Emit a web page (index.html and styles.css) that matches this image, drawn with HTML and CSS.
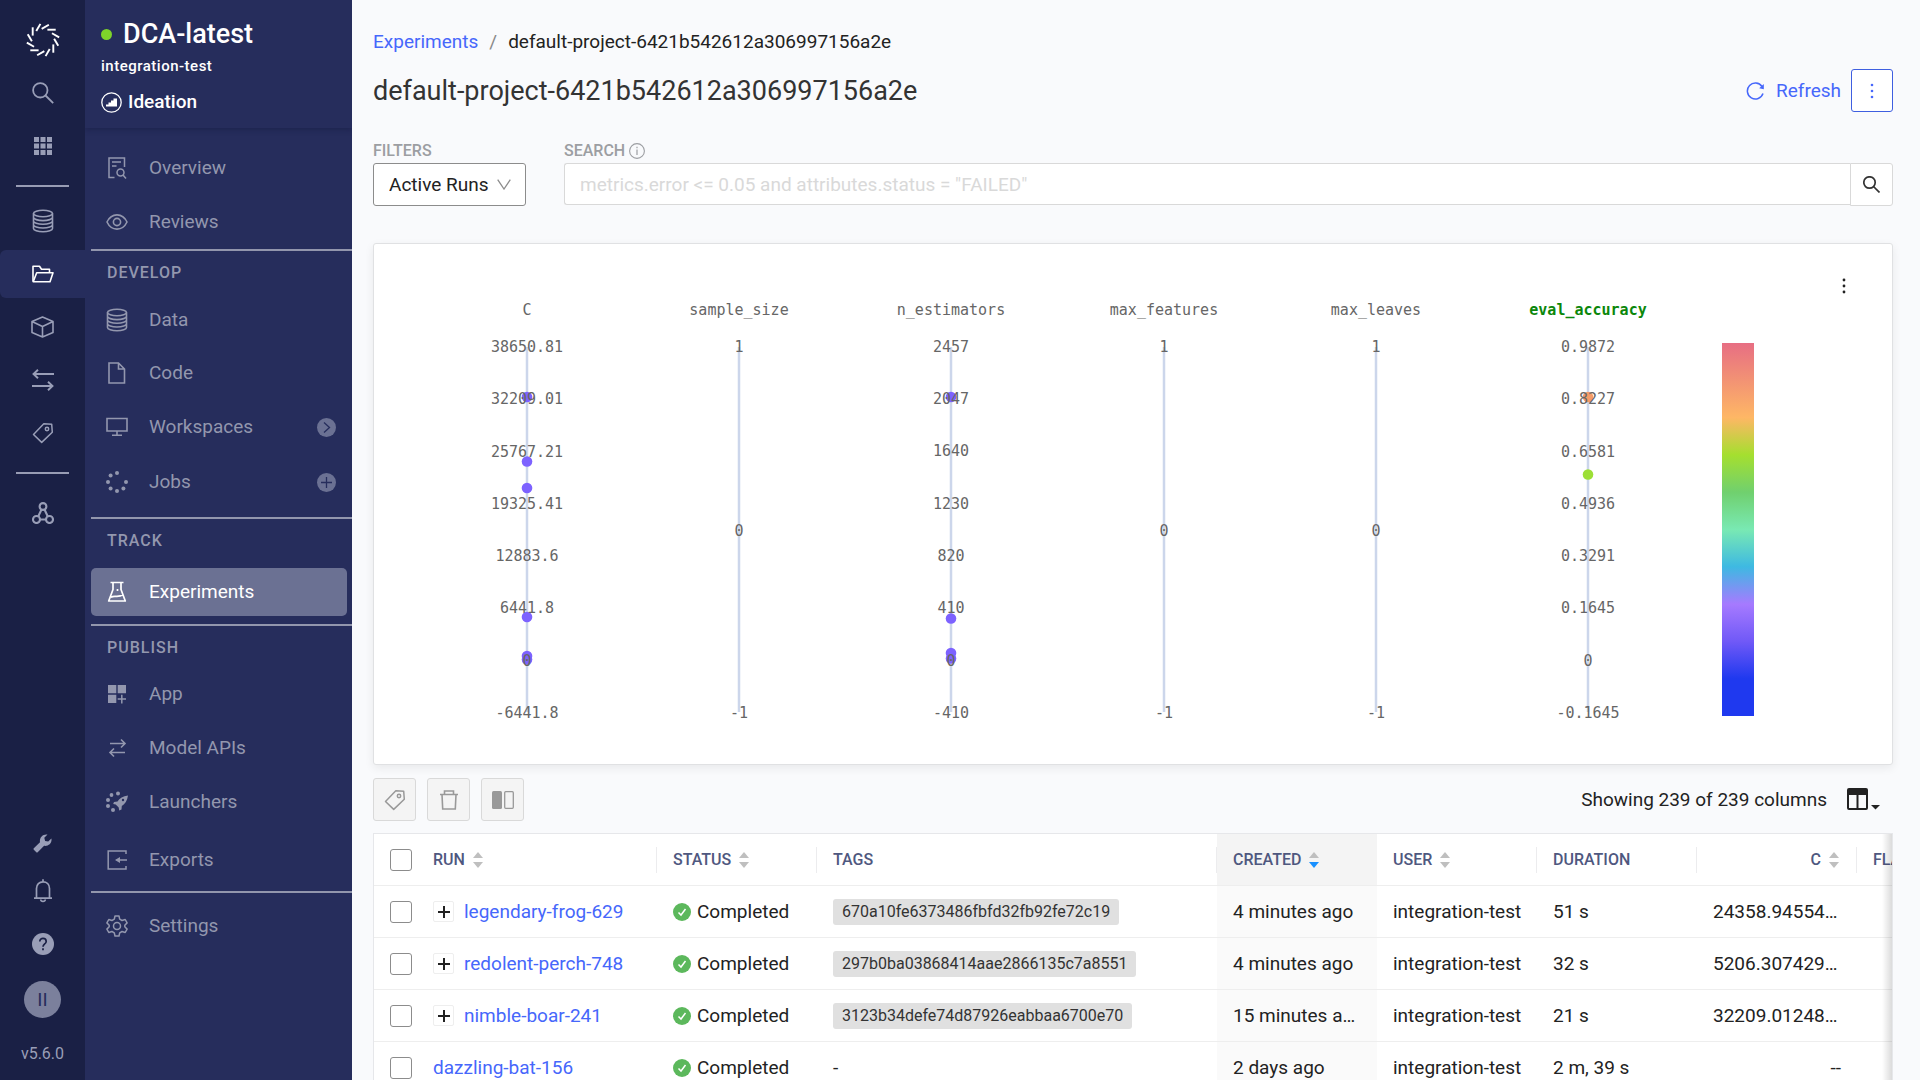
FILE: index.html
```html
<!DOCTYPE html>
<html lang="en">
<head>
<meta charset="utf-8">
<meta name="viewport" content="width=device-width, initial-scale=1">
<title>Experiments - DCA-latest</title>
<link rel="stylesheet" href="styles.css">
</head>
<body>
<svg class="sprite" aria-hidden="true">
  <symbol id="i-database" viewBox="0 0 22 24"><g fill="none" stroke="currentColor" stroke-width="1.6"><ellipse cx="11" cy="4.5" rx="9.5" ry="3.3"/><path d="M1.500 4.500V19.500c0 1.800 4.200 3.300 9.500 3.300s9.500-1.500 9.500-3.300V4.500M1.500 8.300c0 1.800 4.200 3.300 9.500 3.300s9.500-1.500 9.500-3.300M1.500 12c0 1.800 4.200 3.300 9.500 3.300s9.500-1.500 9.500-3.300M1.500 15.700c0 1.800 4.200 3.300 9.500 3.300s9.500-1.500 9.500-3.300"/></g></symbol>
  <symbol id="i-tag" viewBox="0 0 22 22"><g fill="none" stroke="currentColor" stroke-width="1.500" stroke-linejoin="round"><path d="M1.500 12.500 11.800 1.700 19.700 2.200 20.300 10.200 9.700 20.400Z"/><circle cx="15" cy="7" r="1.700"/></g></symbol>
  <symbol id="i-sort" viewBox="0 0 10 16"><path class="sort-up" d="M5 0l5 6H0z"/><path class="sort-down" d="M5 16l5-6H0z"/></symbol>
  <symbol id="i-check" viewBox="0 0 18 18"><circle cx="9" cy="9" r="9" fill="#5cb85c"/><path d="M5.500 9.500l2.500 2.500 4.500-6" fill="none" stroke="#fff" stroke-width="1.500"/></symbol>
  <symbol id="i-plus" viewBox="0 0 12 12"><path d="M6 0v12M0 6h12" fill="none" stroke="#222" stroke-width="2"/></symbol>
</svg>
<div class="app">
  <nav class="rail" aria-label="Global">
    <a class="rail-logo" href="#" aria-label="Home"><svg width="36" height="36" viewBox="-18 -18 36 36"><defs><path id="ray" d="M4.400-10.300H12.700"/></defs><g stroke="#fff" stroke-width="1.900"><use href="#ray"/><use href="#ray" transform="rotate(30)"/><use href="#ray" transform="rotate(60)"/><use href="#ray" transform="rotate(90)"/><use href="#ray" transform="rotate(120)"/><use href="#ray" transform="rotate(150)"/><use href="#ray" transform="rotate(180)"/><use href="#ray" transform="rotate(210)"/><use href="#ray" transform="rotate(240)"/><use href="#ray" transform="rotate(270)"/><use href="#ray" transform="rotate(300)"/><use href="#ray" transform="rotate(330)"/></g></svg></a>
    <a class="rail-item" href="#" aria-label="Search"><svg width="22" height="22" viewBox="0 0 22 22"><g fill="none" stroke="currentColor" stroke-width="1.800"><circle cx="8.300" cy="8.300" r="7.200"/><path d="M13.500 13.500l7.700 7.700"/></g></svg></a>
    <a class="rail-item" href="#" aria-label="Apps"><svg width="18" height="18" viewBox="0 0 18 18"><path fill="currentColor" d="M0 0h5v5H0zM6.500 0h5v5h-5zM13 0h5v5h-5zM0 6.500h5v5H0zM6.500 6.500h5v5h-5zM13 6.500h5v5h-5zM0 13h5v5H0zM6.500 13h5v5h-5zM13 13h5v5h-5z"/></svg></a>
    <hr class="rail-line">
    <a class="rail-item rail-first" href="#" aria-label="Data"><svg width="22" height="24"><use href="#i-database"/></svg></a>
    <a class="rail-item rail-active" href="#" aria-label="Projects"><svg width="22" height="18" viewBox="0 0 22 18"><g fill="none" stroke="currentColor" stroke-width="1.600" stroke-linejoin="round"><path d="M1 16.500V1.200h6.500l2 3h8v3.500"/><path d="M1.200 16.700 4.700 7.700H21L18 16.700Z"/></g></svg></a>
    <a class="rail-item" href="#" aria-label="Models"><svg width="23" height="22" viewBox="0 0 23 22"><g fill="none" stroke="currentColor" stroke-width="1.600" stroke-linejoin="round"><path d="M11.500 1 22 5.500V16.500L11.500 21 1 16.500V5.500ZM1 5.500l10.500 5L22 5.500M11.500 10.500V21"/></g></svg></a>
    <a class="rail-item" href="#" aria-label="Transfers"><svg width="22" height="22" viewBox="0 0 22 22"><g fill="none" stroke="currentColor" stroke-width="1.900"><path d="M22 5H1.500M6 .7 1.500 5 6 9.300M0 17h20.500M16 12.700l4.500 4.300-4.500 4.300"/></g></svg></a>
    <a class="rail-item" href="#" aria-label="Tags"><svg width="22" height="22"><use href="#i-tag"/></svg></a>
    <hr class="rail-line">
    <a class="rail-item rail-cluster" href="#" aria-label="Clusters"><svg width="22" height="22" viewBox="0 0 22 22"><g fill="none" stroke="currentColor" stroke-width="2.100"><circle cx="11" cy="4.500" r="3.400"/><circle cx="4.500" cy="17.500" r="3.500"/><circle cx="17.500" cy="17.500" r="3.500"/><path d="M9.500 7.500 6.200 14.500M12.500 7.500l3.300 7M8 17.500h6"/></g></svg></a>
    <div class="rail-bottom">
      <a class="rail-item" href="#" aria-label="Admin"><svg width="19" height="19" viewBox="0 0 19 19"><path fill="currentColor" d="M.8 14.300 7 8.200C6.200 3.500 9.800-.3 14.500.5L11.300 3.700l.8 3.200 3.100.7 3.200-3.200c.9 4.500-2.800 8.100-7.300 7.400l-6.400 6.400c-.4.400-1 .4-1.400 0L.8 15.700c-.4-.4-.4-1 0-1.400Z"/></svg></a>
      <a class="rail-item" href="#" aria-label="Notifications"><svg width="18" height="24" viewBox="0 0 18 24"><path d="M2.500 19V9.500C2.500 5.500 5.300 2.800 9 2.800s6.500 2.700 6.500 6.700V19M0 19.200h18M9 .3v2.500M6.700 20.500c.3 2.600 4.300 2.600 4.600 0" fill="none" stroke="currentColor" stroke-width="1.700"/></svg></a>
      <a class="rail-item rail-help" href="#" aria-label="Help"><svg width="22" height="22" viewBox="0 0 22 22"><circle cx="11" cy="11" r="11" fill="currentColor"/><path d="M7.800 8.600c0-4.300 6.400-4 6.400-.2 0 2.500-3.200 2.600-3.200 5.400M11 15.300v2" fill="none" stroke="#1a2045" stroke-width="1.700"/></svg></a>
      <button class="avatar" type="button">II</button>
      <span class="version">v5.6.0</span>
    </div>
  </nav>

  <aside class="side">
    <header class="side-head">
      <div class="project"><span class="dot"></span>DCA-latest</div>
      <div class="owner">integration-test</div>
      <div class="stage"><svg width="21" height="21" viewBox="0 0 21 21"><circle cx="10.500" cy="10.500" r="9.700" fill="none" stroke="#fff" stroke-width="1.300"/><path fill="#fff" d="M5 14.500V12.500h2.500v-2H10v-2h2.500v-2H16v8Z"/></svg>Ideation</div>
    </header>
    <nav class="menu" aria-label="Project">
      <div class="group">
        <a class="item" href="#"><svg class="ico" viewBox="0 0 22 22"><g fill="none" stroke="currentColor" stroke-width="1.500"><path d="M8.500 20.500H3V1h15.500v9M6 5h9M6 9h4.500"/><circle cx="14.500" cy="15.500" r="3.500"/><path d="M17 18l3 3.500"/></g></svg>Overview</a>
        <a class="item" href="#"><svg class="ico" viewBox="0 0 22 22"><g fill="none" stroke="currentColor" stroke-width="1.600"><path d="M1 11c4.500-9.500 15.500-9.500 20 0-4.500 9.500-15.500 9.500-20 0Z"/><circle cx="11" cy="11" r="3.600"/></g></svg>Reviews</a>
      </div>
      <h2 class="heading">DEVELOP</h2>
      <div class="group group-develop">
        <a class="item" href="#"><svg class="ico ico-tall"><use href="#i-database"/></svg>Data</a>
        <a class="item" href="#"><svg class="ico" viewBox="0 0 22 22"><path d="M3 1h9.500l6 6v14H3ZM12.500 1v6h6" fill="none" stroke="currentColor" stroke-width="1.600"/></svg>Code</a>
        <a class="item item-action" href="#"><svg class="ico" viewBox="0 0 22 22"><path d="M1 2.500h20v12.500H1ZM11 15v4M6 19.200h10" fill="none" stroke="currentColor" stroke-width="1.600"/></svg>Workspaces<svg class="badge" viewBox="0 0 19 19"><circle cx="9.500" cy="9.500" r="9.500" fill="#6b7193"/><path d="M7 4.500l5.500 5-5.500 5" fill="none" stroke="#262d5c" stroke-width="1.300"/></svg></a>
        <a class="item item-action" href="#"><svg class="ico" viewBox="0 0 22 22"><g fill="currentColor"><circle cx="11" cy="2" r="2"/><circle cx="4.600" cy="4.600" r="2"/><circle cx="2" cy="11" r="2"/><circle cx="4.600" cy="17.400" r="2"/><circle cx="11" cy="20" r="2"/><circle cx="17.400" cy="17.400" r="2"/><circle cx="20" cy="11" r="2"/></g></svg>Jobs<svg class="badge" viewBox="0 0 19 19"><circle cx="9.500" cy="9.500" r="9.500" fill="#6b7193"/><path d="M9.500 4v11M4 9.500h11" fill="none" stroke="#262d5c" stroke-width="1.300"/></svg></a>
      </div>
      <h2 class="heading">TRACK</h2>
      <div class="group group-track">
        <a class="item item-active" href="#" aria-current="page"><svg class="ico" viewBox="0 0 22 22"><g fill="none" stroke="currentColor" stroke-width="1.700" stroke-linejoin="round"><path d="M4.500 1.500h13M7 1.500v7L2.700 20h16.600L15 8.500v-7M5 16.500c3-3 7 1 12-3"/><path d="M11.500 8v2"/></g></svg>Experiments</a>
      </div>
      <h2 class="heading">PUBLISH</h2>
      <div class="group group-publish">
        <a class="item" href="#"><svg class="ico" viewBox="0 0 22 22"><path fill="currentColor" d="M2 2h8.300v8.300H2zM11.700 2H20v8.300h-8.300zM2 11.700h8.300V20H2z"/><path d="M15.800 11.700V20.500M11.700 16H20" stroke="currentColor" stroke-width="1.500"/></svg>App</a>
        <a class="item" href="#"><svg class="ico" viewBox="0 0 22 22"><path d="M4 6.500h15M15 2.500l4 4-4 4M19 15.500H4M8 11.500l-4 4 4 4" fill="none" stroke="currentColor" stroke-width="1.600"/></svg>Model APIs</a>
        <a class="item" href="#"><svg class="ico" viewBox="0 0 22 22"><g fill="currentColor"><circle cx="12" cy="2.500" r="2"/><circle cx="5.500" cy="4" r="1.900"/><circle cx="2" cy="9" r="2"/><circle cx="2" cy="15" r="2"/><circle cx="7" cy="19" r="2"/><path d="M22 4.500c-5 .5-8.500 3-10.500 6L8 11l-.8 2 2.500.5 3 3 .5 3 2.300-1 .3-3.500c3.200-2 5.500-5.500 6.200-10.500Z"/></g><circle cx="17" cy="9" r="1.200" fill="#262d5c"/></svg>Launchers</a>
        <a class="item item-exports" href="#"><svg class="ico" viewBox="0 0 22 22"><path d="M20 5V2H2.200v18H20v-3M21 11H10.500" fill="none" stroke="currentColor" stroke-width="1.500"/><path fill="currentColor" d="M9 11l5-3v6z"/></svg>Exports</a>
      </div>
      <div class="group group-settings">
        <a class="item" href="#"><svg class="ico" viewBox="0 0 22 22"><g fill="none" stroke="currentColor" stroke-width="1.500" stroke-linejoin="round"><path d="M9 1h4l.7 3.200 2.300 1.300L19.200 4.500l1.900 3.400L18.800 10.200v1.600l2.300 2.300-1.900 3.400L16 16.500l-2.300 1.300L13 21H9l-.7-3.200L6 16.500 2.800 17.500.9 14.100l2.300-2.300v-1.600L.9 7.900 2.800 4.500 6 5.500l2.300-1.300Z"/><circle cx="11" cy="11" r="3.500"/></g></svg>Settings</a>
      </div>
    </nav>
  </aside>

  <main class="main">
    <div class="crumbs"><a href="#">Experiments</a><span class="slash">/</span><span>default-project-6421b542612a306997156a2e</span></div>
    <div class="title-row">
      <h1>default-project-6421b542612a306997156a2e</h1>
      <button class="refresh" type="button"><svg width="18" height="18" viewBox="0 0 18 18"><path d="M16 4.500A8 8 0 1 0 17 11.500" fill="none" stroke="currentColor" stroke-width="1.500"/><path d="M17.800 2v5.200l-4.600-1z" fill="currentColor"/></svg>Refresh</button>
      <button class="more" type="button" aria-label="More actions"><svg width="4" height="18" viewBox="0 0 4 18"><g fill="currentColor"><circle cx="2" cy="3" r="1.300"/><circle cx="2" cy="9" r="1.300"/><circle cx="2" cy="15" r="1.300"/></g></svg></button>
    </div>
    <form class="filters">
      <div class="field">
        <label for="state">FILTERS</label>
        <div class="select"><select id="state"><option>Active Runs</option></select><svg width="14" height="11" viewBox="0 0 14 11"><path d="M.7.7 7 10 13.300.7" fill="none" stroke="#8c8c8c" stroke-width="1.300"/></svg></div>
      </div>
      <div class="field field-wide">
        <label for="query">SEARCH <svg width="16" height="16" viewBox="0 0 16 16"><circle cx="8" cy="8" r="7.400" fill="none" stroke="currentColor" stroke-width="1.100"/><path d="M8 6.500v5.500M8 3.800v1.500" stroke="currentColor" stroke-width="1.200"/></svg></label>
        <div class="search"><input id="query" type="text" placeholder='metrics.error &lt;= 0.05 and attributes.status = "FAILED"'><button type="submit" aria-label="Search"><svg width="17" height="17" viewBox="0 0 17 17"><g fill="none" stroke="#333" stroke-width="1.700"><circle cx="6.500" cy="6.500" r="5.700"/><path d="M10.500 10.500l6 6"/></g></svg></button></div>
      </div>
    </form>

    <section class="card">
      <button class="card-menu" type="button" aria-label="Chart menu"><svg width="4" height="18" viewBox="0 0 4 18"><g fill="#222"><circle cx="2" cy="3" r="1.400"/><circle cx="2" cy="9" r="1.400"/><circle cx="2" cy="15" r="1.400"/></g></svg></button>
      <svg class="chart" viewBox="0 -1 1518 520" role="img" aria-label="Parallel coordinates">
        <defs><linearGradient id="scale" x1="0" y1="0" x2="0" y2="1"><stop offset="0" stop-color="#e76e83"/><stop offset=".2" stop-color="#feb765"/><stop offset=".3" stop-color="#a5df2f"/><stop offset=".4" stop-color="#70d06e"/><stop offset=".5" stop-color="#79e9b3"/><stop offset=".6" stop-color="#3eb9e2"/><stop offset=".7" stop-color="#a67aff"/><stop offset=".8" stop-color="#7059f7"/><stop offset=".9" stop-color="#1f39ef"/></linearGradient></defs>
        <path class="axis" d="M153 102V467M365 102V467M577 102V467M790 102V467M1002 102V467M1214 102V467"/>
        <g fill="#7d62ff"><circle cx="153" cy="152" r="5.300"/><circle cx="153" cy="216.500" r="5.300"/><circle cx="153" cy="243" r="5.300"/><circle cx="153" cy="372" r="5.300"/><circle cx="153" cy="411" r="5.300"/><circle cx="153" cy="414.500" r="5.300"/><circle cx="577" cy="152" r="5.300"/><circle cx="577" cy="373.500" r="5.300"/><circle cx="577" cy="408" r="5.300"/><circle cx="577" cy="413.500" r="5.300"/></g>
        <circle cx="1214" cy="152" r="5.300" fill="#f59c69"/><circle cx="1214" cy="229.500" r="5.300" fill="#9ddf36"/>
        <g class="names"><text x="153" y="70">C</text><text x="365" y="70">sample_size</text><text x="577" y="70">n_estimators</text><text x="790" y="70">max_features</text><text x="1002" y="70">max_leaves</text><text class="target" x="1214" y="70">eval_accuracy</text></g>
        <g class="ticks">
          <text x="153" y="107">38650.81</text><text x="153" y="159">32209.01</text><text x="153" y="212">25767.21</text><text x="153" y="264">19325.41</text><text x="153" y="316">12883.6</text><text x="153" y="368">6441.8</text><text x="153" y="421">0</text><text x="153" y="473">-6441.8</text>
          <text x="365" y="107">1</text><text x="365" y="291">0</text><text x="365" y="473">-1</text>
          <text x="577" y="107">2457</text><text x="577" y="159">2047</text><text x="577" y="211">1640</text><text x="577" y="264">1230</text><text x="577" y="316">820</text><text x="577" y="368">410</text><text x="577" y="421">0</text><text x="577" y="473">-410</text>
          <text x="790" y="107">1</text><text x="790" y="291">0</text><text x="790" y="473">-1</text>
          <text x="1002" y="107">1</text><text x="1002" y="291">0</text><text x="1002" y="473">-1</text>
          <text x="1214" y="107">0.9872</text><text x="1214" y="159">0.8227</text><text x="1214" y="212">0.6581</text><text x="1214" y="264">0.4936</text><text x="1214" y="316">0.3291</text><text x="1214" y="368">0.1645</text><text x="1214" y="421">0</text><text x="1214" y="473">-0.1645</text>
        </g>
        <rect x="1348" y="98" width="32" height="373" fill="url(#scale)"/>
      </svg>
    </section>

    <div class="toolbar">
      <button class="tool" type="button" aria-label="Tag runs" disabled><svg width="22" height="22"><use href="#i-tag"/></svg></button>
      <button class="tool" type="button" aria-label="Delete runs" disabled><svg width="18" height="20" viewBox="0 0 18 20"><path d="M0 4.500h18M4.500 4.500v-3.500h9v3.500M2 4.500l.7 14.500h12.600L16 4.500" fill="none" stroke="currentColor" stroke-width="1.600"/></svg></button>
      <button class="tool" type="button" aria-label="Compare runs" disabled><svg width="22" height="18" viewBox="0 0 22 18"><rect width="10" height="18" rx="1.500" fill="currentColor"/><rect x="12.700" y=".7" width="8.600" height="16.600" rx="1" fill="none" stroke="currentColor" stroke-width="1.300"/></svg></button>
      <span class="count">Showing 239 of 239 columns</span>
      <button class="columns" type="button" aria-label="Choose columns"><svg width="33" height="23" viewBox="0 0 33 23"><path fill="#222" fill-rule="evenodd" d="M2 0h17a2 2 0 0 1 2 2v18a2 2 0 0 1-2 2H2a2 2 0 0 1-2-2V2a2 2 0 0 1 2-2ZM2 7v13h7.500V7ZM11.500 7v13H19V7Z"/><path fill="#222" d="M24 17h9l-4.500 4.500z"/></svg></button>
    </div>

    <div class="table-wrap">
      <table class="runs">
        <colgroup><col class="c-check"><col class="c-run"><col class="c-std"><col class="c-tags"><col class="c-std"><col class="c-std"><col class="c-std"><col class="c-std"><col class="c-std"></colgroup>
        <thead><tr>
          <th class="check"><input type="checkbox" aria-label="Select all runs"></th>
          <th><span class="th line">RUN<svg class="sort"><use href="#i-sort"/></svg></span></th>
          <th><span class="th line">STATUS<svg class="sort"><use href="#i-sort"/></svg></span></th>
          <th><span class="th line">TAGS</span></th>
          <th class="sorted"><span class="th">CREATED<svg class="sort sort-desc"><use href="#i-sort"/></svg></span></th>
          <th><span class="th line">USER<svg class="sort"><use href="#i-sort"/></svg></span></th>
          <th><span class="th line">DURATION</span></th>
          <th><span class="th line th-num">C<svg class="sort"><use href="#i-sort"/></svg></span></th>
          <th><span class="th">FLAG</span></th>
        </tr></thead>
        <tbody>
          <tr><td class="check"><input type="checkbox" aria-label="Select legendary-frog-629"></td><td><div class="run"><button class="expand" type="button" aria-label="Expand"><svg width="12" height="12"><use href="#i-plus"/></svg></button><a href="#">legendary-frog-629</a></div></td><td><div class="status"><svg width="18" height="18"><use href="#i-check"/></svg>Completed</div></td><td><span class="chip">670a10fe6373486fbfd32fb92fe72c19</span></td><td class="sorted">4 minutes ago</td><td class="user">integration-test</td><td>51 s</td><td class="num">24358.945541076</td><td></td></tr>
          <tr><td class="check"><input type="checkbox" aria-label="Select redolent-perch-748"></td><td><div class="run"><button class="expand" type="button" aria-label="Expand"><svg width="12" height="12"><use href="#i-plus"/></svg></button><a href="#">redolent-perch-748</a></div></td><td><div class="status"><svg width="18" height="18"><use href="#i-check"/></svg>Completed</div></td><td><span class="chip">297b0ba03868414aae2866135c7a8551</span></td><td class="sorted">4 minutes ago</td><td class="user">integration-test</td><td>32 s</td><td class="num">5206.3074291862</td><td></td></tr>
          <tr><td class="check"><input type="checkbox" aria-label="Select nimble-boar-241"></td><td><div class="run"><button class="expand" type="button" aria-label="Expand"><svg width="12" height="12"><use href="#i-plus"/></svg></button><a href="#">nimble-boar-241</a></div></td><td><div class="status"><svg width="18" height="18"><use href="#i-check"/></svg>Completed</div></td><td><span class="chip">3123b34defe74d87926eabbaa6700e70</span></td><td class="sorted">15 minutes ago</td><td class="user">integration-test</td><td>21 s</td><td class="num">32209.012481305</td><td></td></tr>
          <tr><td class="check"><input type="checkbox" aria-label="Select dazzling-bat-156"></td><td><div class="run"><a href="#">dazzling-bat-156</a></div></td><td><div class="status"><svg width="18" height="18"><use href="#i-check"/></svg>Completed</div></td><td>-</td><td class="sorted">2 days ago</td><td class="user">integration-test</td><td>2 m, 39 s</td><td class="num">--</td><td></td></tr>
        </tbody>
      </table>
    </div>
  </main>
</div>
</body>
</html>
```
FILE: styles.css
```css
* { box-sizing: border-box; }
body { margin: 0; font-family: Roboto, "Liberation Sans", sans-serif; font-size: 19px; line-height: 24px; color: #222; background: #f9fafc; }
a { color: #4667fb; text-decoration: none; }
button, input, select { font: inherit; color: inherit; margin: 0; }
button { cursor: pointer; padding: 0; border: 0; background: none; }
svg { display: block; flex: none; }
h1, h2 { margin: 0; font-weight: 400; }
.sprite { display: none; }
.app { display: flex; height: 100vh; overflow: hidden; }

/* icon rail */
.rail { width: 85px; flex: none; display: flex; flex-direction: column; gap: 5px; padding: 16px 0 15px; background: #1a2045; color: #999eb7; }
.rail a { color: inherit; }
.rail-logo, .rail-item { height: 48px; display: flex; align-items: center; justify-content: center; }
.rail-line { width: 53px; height: 2px; margin: 10px auto 0; border: 0; background: #989cb4; }
.rail-first { margin-top: 5px; }
.rail .rail-active { background: #262d5c; color: #fff; border-radius: 6px 0 0 6px; }
.rail-cluster { margin-top: 10px; }
.rail-bottom { margin-top: auto; display: flex; flex-direction: column; }
.rail-help { margin-top: 5px; }
.avatar { width: 37px; height: 37px; margin: 13px auto 0; border-radius: 50%; background: #7b809c; color: #262d5c; }
.version { margin-top: 25px; text-align: center; font-size: 16px; line-height: 22px; }

/* project menu */
.side { width: 267px; flex: none; background: #262d5c; color: #9397ae; }
.side-head { height: 128px; padding: 18px 16px 0; color: #fff; font-weight: 500; box-shadow: 0 2px 5px rgba(15, 20, 55, .35); clip-path: inset(0 0 -8px 0); }
.project { display: flex; align-items: center; gap: 11px; font-size: 27px; line-height: 32px; }
.dot { width: 11px; height: 11px; border-radius: 50%; background: #7ed32a; }
.owner { margin-top: 6px; font-size: 15px; line-height: 20px; letter-spacing: .5px; }
.stage { display: flex; align-items: center; gap: 6px; margin-top: 14px; }
.menu { padding: 16px 0 0 6px; }
.group { display: grid; gap: 6px; padding-bottom: 3px; border-bottom: 2px solid #9296ad; }
.group-develop { gap: 5px; padding: 13px 0 10px; }
.group-track { padding: 17px 0 8px; }
.group-publish { padding: 12px 0 7px; }
.group-settings { padding-top: 9px; border: 0; }
.item { height: 48px; display: flex; align-items: center; gap: 21px; margin-right: 5px; padding: 0 11px 0 15px; border-radius: 5px; color: inherit; }
.item-action { height: 50px; }
.item-exports { margin-top: 4px; }
.item-active { background: #6b7193; color: #fff; }
.ico { width: 22px; height: 22px; }
.ico-tall { height: 24px; }
.badge { width: 19px; height: 19px; margin-left: auto; }
.heading { padding: 12px 0 0 16px; font-size: 16px; line-height: 20px; font-weight: 500; letter-spacing: 1px; }

/* content */
.main { flex: 1; min-width: 0; padding: 30px 27px 0 21px; }
.crumbs { display: flex; gap: 11px; }
.slash { color: #888; }
.title-row { display: flex; align-items: center; margin-top: 15px; }
h1 { font-size: 27px; line-height: 32px; color: #333; margin-right: auto; }
.refresh { display: flex; align-items: center; gap: 12px; margin-right: 10px; color: #4667fb; }
.more { width: 42px; height: 43px; display: grid; place-items: center; border: 1px solid #3f5fe0; border-radius: 3px; background: #fff; color: #4667fb; }
.filters { display: flex; gap: 38px; margin-top: 27px; }
.field label { display: flex; align-items: center; gap: 4px; font-size: 16px; line-height: 24px; font-weight: 500; color: #9c9ea2; }
.field-wide { flex: 1; }
.select { width: 153px; display: grid; align-items: center; }
.select select { grid-area: 1 / 1; height: 43px; padding: 0 15px; appearance: none; border: 1px solid #8c8c8c; border-radius: 3px; background: #fff; }
.select svg { grid-area: 1 / 1; justify-self: end; margin-right: 15px; pointer-events: none; }
.search { display: flex; }
.search input { flex: 1; min-width: 0; height: 42px; padding: 0 15px; border: 1px solid #d9d9d9; border-right: 0; border-radius: 3px 0 0 3px; background: #fff; }
.search input::placeholder { color: #d9d9d9; opacity: 1; }
.search button { width: 43px; height: 43px; display: grid; place-items: center; border: 1px solid #d9d9d9; border-radius: 0 3px 3px 0; background: #fff; }

/* chart */
.card { position: relative; margin-top: 37px; border: 1px solid #e0e1e3; border-radius: 3px; background: #fff; box-shadow: 0 3px 10px rgba(0, 0, 0, .07); }
.card-menu { position: absolute; top: 32px; right: 38px; width: 20px; height: 20px; display: grid; place-items: center; }
.chart { width: 100%; height: auto; }
.axis { stroke: #ccd6eb; stroke-width: 2.5; }
.names, .ticks { font-family: "DejaVu Sans Mono", monospace; font-size: 15px; fill: #666; text-anchor: middle; }
.target { fill: #0b870b; font-weight: 700; }

/* toolbar */
.toolbar { display: flex; align-items: center; gap: 11px; margin: 13px 0 12px; }
.tool { width: 43px; height: 43px; display: grid; place-items: center; border: 1px solid #d9d9d9; border-radius: 3px; background: #f4f4f4; color: #999; }
.count { margin-left: auto; }
.columns { margin: 0 13px 0 9px; }

/* runs table */
.table-wrap { position: relative; overflow: hidden; border: 1px solid #e6e7ea; border-bottom: 0; background: #fff; }
.table-wrap::after { content: ""; position: absolute; top: 0; right: 0; bottom: 0; width: 10px; background: linear-gradient(to left, rgba(0, 0, 0, .14), transparent); }
.runs { width: 1643px; table-layout: fixed; border-collapse: separate; border-spacing: 0; }
.c-check { width: 43px; }
.c-run { width: 240px; }
.c-tags { width: 400px; }
.c-std { width: 160px; }
.runs th, .runs td { height: 52px; padding: 0 16px; border-bottom: 1px solid #eee; text-align: left; overflow: hidden; white-space: nowrap; text-overflow: ellipsis; }
.runs th { padding-right: 0; font-size: 16px; font-weight: 500; color: #4f587f; }
.runs .check { padding-right: 0; text-overflow: clip; }
.runs .user { padding-right: 8px; }
.runs .num { text-align: right; }
.runs th.sorted { background: #f4f4f4; }
.runs td.sorted { background: #fafafa; }
.th { display: flex; align-items: center; gap: 8px; height: 26px; padding-right: 17px; }
.line { border-right: 1px solid #ececee; }
.th-num { justify-content: flex-end; }
.sort { width: 10px; height: 16px; color: #bfbfbf; fill: #bfbfbf; }
.sort-down { fill: currentColor; }
.sort-desc { color: #1890ff; }
.runs input { display: block; width: 22px; height: 22px; appearance: none; border: 1px solid #8c8c8c; border-radius: 3px; background: #fff; }
.run { display: flex; align-items: center; gap: 10px; }
.expand { width: 21px; height: 21px; display: grid; place-items: center; border: 1px solid #eee; border-radius: 2px; }
.status { display: flex; align-items: center; gap: 6px; }
.chip { display: inline-block; padding: 0 9px; border-radius: 3px; background: #e0e0e0; color: #333; font-size: 16px; line-height: 26px; }
```
